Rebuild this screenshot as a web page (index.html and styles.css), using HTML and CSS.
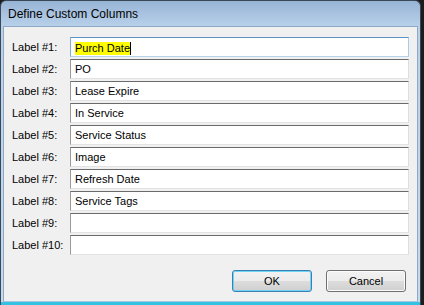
FILE: index.html
```html
<!DOCTYPE html>
<html lang="en">
<head>
    <meta charset="UTF-8">
    <title>Define Custom Columns</title>
    <link rel="stylesheet" href="styles.css">
</head>
<body>
    <div class="window">
        <div class="titlebar">Define Custom Columns</div>
        <div class="client">
            <div class="form">
                <div class="row">
                    <span class="label">Label #1:</span>
                    <div class="field focused"><span class="selected">Purch Date</span></div>
                </div>
                <div class="row">
                    <span class="label">Label #2:</span>
                    <div class="field">PO</div>
                </div>
                <div class="row">
                    <span class="label">Label #3:</span>
                    <div class="field">Lease Expire</div>
                </div>
                <div class="row">
                    <span class="label">Label #4:</span>
                    <div class="field">In Service</div>
                </div>
                <div class="row">
                    <span class="label">Label #5:</span>
                    <div class="field">Service Status</div>
                </div>
                <div class="row">
                    <span class="label">Label #6:</span>
                    <div class="field">Image</div>
                </div>
                <div class="row">
                    <span class="label">Label #7:</span>
                    <div class="field">Refresh Date</div>
                </div>
                <div class="row">
                    <span class="label">Label #8:</span>
                    <div class="field">Service Tags</div>
                </div>
                <div class="row">
                    <span class="label">Label #9:</span>
                    <div class="field"></div>
                </div>
                <div class="row">
                    <span class="label">Label #10:</span>
                    <div class="field"></div>
                </div>
            </div>
            <div class="buttons">
                <button class="btn btn-default">OK</button>
                <button class="btn">Cancel</button>
            </div>
        </div>
    </div>
</body>
</html>
```

FILE: styles.css
```css
body {
    margin: 0;
    background: #1c1c1c;
    font-family: 'Liberation Sans', Arial, sans-serif;
    font-size: 11px;
    color: #000;
}

.window {
    box-sizing: border-box;
    width: 421px;
    height: 305px;
    border: 1px solid #3a4756;
    border-bottom: none;
    border-radius: 6px 6px 0 0;
    background: linear-gradient(#98b4d5, #b9d1ea 26px, #c4daef);
    display: flex;
    flex-direction: column;
    box-shadow: inset 0 -3px 0 #34c2e2;
}

.titlebar {
    height: 25px;
    line-height: 27px;
    padding-left: 7px;
    font-size: 12px;
}

.client {
    flex: 1;
    margin: 0 2px 3px 2px;
    border: 1px solid #8fa9c4;
    border-bottom-color: #a9c6de;
    background: #f0f0f0;
    padding: 10px 8px 0 8px;
}

.form {
    display: flex;
    flex-direction: column;
    gap: 2px;
}

.row {
    display: grid;
    grid-template-columns: 58px 1fr;
    align-items: center;
    height: 20px;
}

.field {
    box-sizing: border-box;
    height: 20px;
    line-height: 18px;
    padding: 0 4px;
    background: #fff;
    border: 1px solid;
    border-color: #6b6b6b #dedede #e3e3e3 #9a9a9a;
    white-space: nowrap;
}

.field.focused {
    border-color: #5b93c4 #a9cbe6 #b5d3ea #7fb0d8;
}

.selected {
    display: inline-block;
    line-height: 13px;
    background: #ffff00;
    border-right: 1px solid #000;
    vertical-align: middle;
}

.buttons {
    display: flex;
    justify-content: flex-end;
    gap: 14px;
    margin-top: 15px;
    padding-right: 3px;
}

.btn {
    width: 80px;
    height: 22px;
    padding: 0;
    font-family: 'Liberation Sans', Arial, sans-serif;
    font-size: 11px;
    color: #000;
    border: 1px solid #707070;
    border-radius: 3px;
    background: linear-gradient(#f2f2f2, #ebebeb 50%, #dddddd 50%, #cfcfcf);
    box-shadow: inset 0 0 0 1px #fbfbfb;
}

.btn-default {
    border-color: #3c7fb1;
    box-shadow: inset 0 0 0 1px #6fd3f7;
}
```
